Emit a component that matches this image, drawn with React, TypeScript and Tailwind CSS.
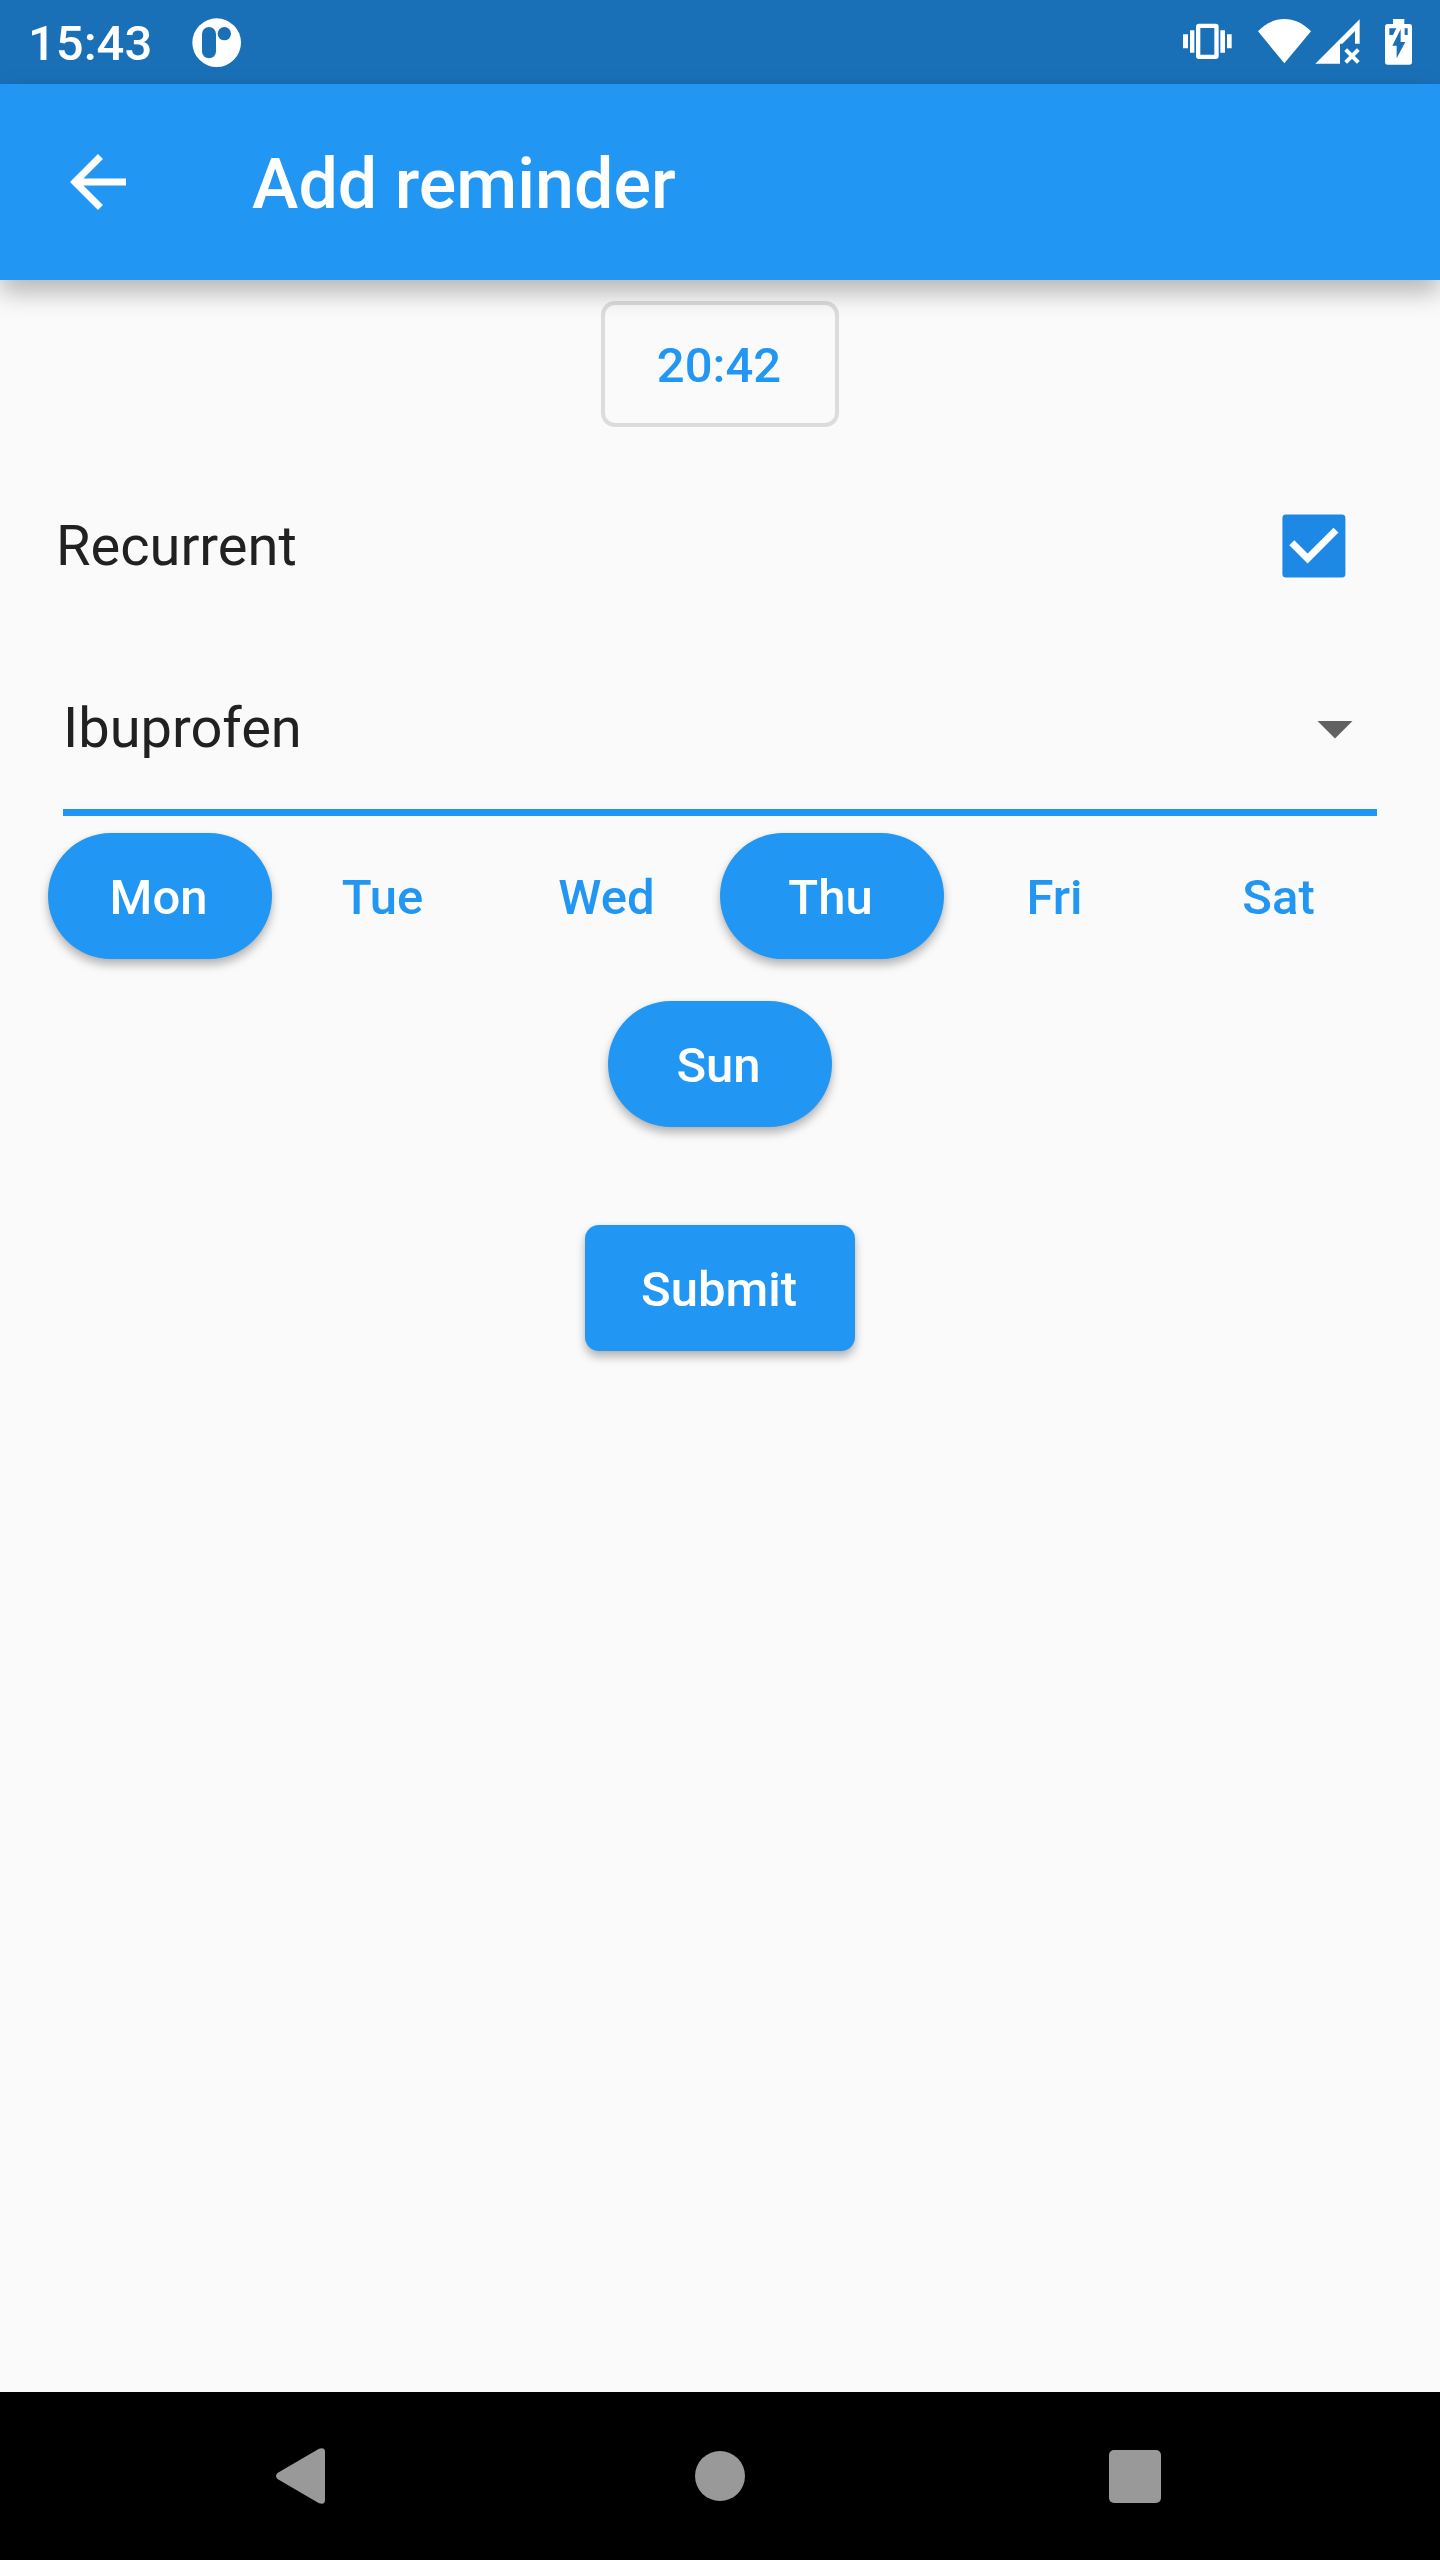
const days = [
  { label: "Mon", on: true },
  { label: "Tue", on: false },
  { label: "Wed", on: false },
  { label: "Thu", on: true },
  { label: "Fri", on: false },
  { label: "Sat", on: false },
  { label: "Sun", on: true },
];

function StatusBar() {
  return (
    <div className="flex h-[84px] items-center bg-[#1a70b7] pl-[28px] pr-[28px] text-white">
      <span className="mt-[4px] w-[132px] text-[49px] leading-[58px] font-medium">15:43</span>
      <svg className="ml-[32px] h-[49px] w-[49px]" viewBox="575 53 147 147">
        <circle cx="649" cy="127" r="73" fill="#fff" />
        <rect x="605" y="80" width="42" height="94" rx="21" fill="#1a70b7" />
        <circle cx="672" cy="100" r="20" fill="#1a70b7" />
      </svg>
      <svg className="ml-auto h-[84px] w-[50px]" viewBox="69 0 150 252" fill="#fff">
        <path d="M69 103h15v42H69zM90 91h13v67H90zM181 91h14v67h-14zM201 103h14v42h-14z" />
        <path
          fillRule="evenodd"
          d="M117 71h50a9 9 0 0 1 9 9v88a9 9 0 0 1-9 9h-50a9 9 0 0 1-9-9V80a9 9 0 0 1 9-9zM121 84v80h42V84z"
        />
      </svg>
      <svg className="ml-[25px] h-[84px] w-[53px]" viewBox="294 0 159 252" fill="#fff">
        <path d="M294 94C340 45 406 45 453 94L373 190Z" />
      </svg>
      <svg className="ml-[4px] h-[84px] w-[45px]" viewBox="465 0 135 252" fill="#fff">
        <path d="M466 191L599 58V131H585V93L547 131H540V191Z" />
        <path d="M557 149L595 187M595 149L557 187" stroke="#fff" strokeWidth="12" />
      </svg>
      <svg className="ml-[25px] h-[84px] w-[27px]" viewBox="675 0 81 252">
        <path d="M699 57h34v15h15a8 8 0 0 1 8 8v106a8 8 0 0 1-8 8h-65a8 8 0 0 1-8-8V80a8 8 0 0 1 8-8h16z" fill="#fff" />
        <path d="M688 85h21l-10 20h-11zM734 85h9v20h-9zM722 87V126h14L710 175V137H697Z" fill="#1a70b7" />
      </svg>
    </div>
  );
}

function AppBar() {
  return (
    <header className="relative flex h-[196px] items-center bg-[#2196f3] pl-[56px] text-white shadow-[0_12px_24px_rgba(0,0,0,0.28)]">
      <svg className="h-[84px] w-[84px]" viewBox="0 0 24 24" fill="currentColor">
        <path d="M20 11H7.83l5.59-5.59L12 4l-8 8 8 8 1.41-1.41L7.83 13H20v-2z" />
      </svg>
      <h1 className="ml-[112px] pt-[4px] text-[70px] leading-[82px] font-medium">Add reminder</h1>
    </header>
  );
}

function DayButton({ label, on }: { label: string; on: boolean }) {
  return (
    <button
      className={
        on
          ? "h-[126px] w-[224px] rounded-full bg-[#2196f3] pt-[3px] pr-[3px] text-[49px] font-medium text-white shadow-[0_6px_10px_rgba(0,0,0,0.27),0_0_4px_rgba(0,0,0,0.06)]"
          : "h-[126px] w-[224px] rounded-full pt-[3px] pr-[3px] text-[49px] font-medium text-[#2196f3]"
      }
    >
      {label}
    </button>
  );
}

function NavBar() {
  return (
    <nav className="flex h-[168px] items-center bg-black pl-[276px]">
      <svg className="h-[56px] w-[49px]" viewBox="0 0 49 56" fill="#999">
        <path d="M1.5 25L43 .8Q49-1 49 4V52Q49 57 43 55.2L1.5 31Q-1.5 28 1.5 25Z" />
      </svg>
      <div className="ml-[370px] h-[50px] w-[50px] rounded-full bg-[#999]" />
      <div className="ml-[364px] h-[53px] w-[52px] rounded-[5px] bg-[#999]" />
    </nav>
  );
}

export default function App() {
  return (
    <div className="flex h-[2560px] w-[1440px] flex-col bg-[#fafafa] font-['Roboto',sans-serif] text-[#212121]">
      <StatusBar />
      <AppBar />
      <main className="flex flex-1 flex-col items-center pt-[21px]">
        <button className="h-[126px] w-[238px] rounded-[14px] border-4 border-[#dcdcdc] pt-[3px] pr-[2px] text-[49px] font-medium text-[#2196f3]">
          20:42
        </button>
        <label className="mt-[35px] flex h-[168px] w-full items-center justify-between pr-[94px] pl-[56px] text-[56px]">
          Recurrent
          <svg className="h-[64px] w-[64px]" viewBox="0 0 64 64">
            <rect x="0.4" y="0.4" width="63" height="63" rx="3.5" fill="#1e88e5" />
            <path d="M9.8 28.7L25.6 44.5L54 16.1" fill="none" stroke="#fff" strokeWidth="7" />
          </svg>
        </label>
        <div className="mt-[14px] flex h-[172px] w-[1314px] items-center justify-between border-b-[7px] border-[#2196f3] pt-[3px] text-[56px]">
          Ibuprofen
          <svg className="h-[84px] w-[84px]" viewBox="0 0 24 24" fill="#616161">
            <path d="M7 10l5 5 5-5z" />
          </svg>
        </div>
        <div className="mt-[17px] flex w-[1344px] flex-wrap justify-center gap-y-[42px]">
          {days.map((d) => (
            <DayButton key={d.label} label={d.label} on={d.on} />
          ))}
        </div>
        <button className="mt-[98px] h-[126px] w-[270px] rounded-[14px] bg-[#2196f3] pt-[3px] pr-[2px] text-[49px] font-medium text-white shadow-[0_6px_10px_rgba(0,0,0,0.27),0_0_4px_rgba(0,0,0,0.06)]">
          Submit
        </button>
      </main>
      <NavBar />
    </div>
  );
}
